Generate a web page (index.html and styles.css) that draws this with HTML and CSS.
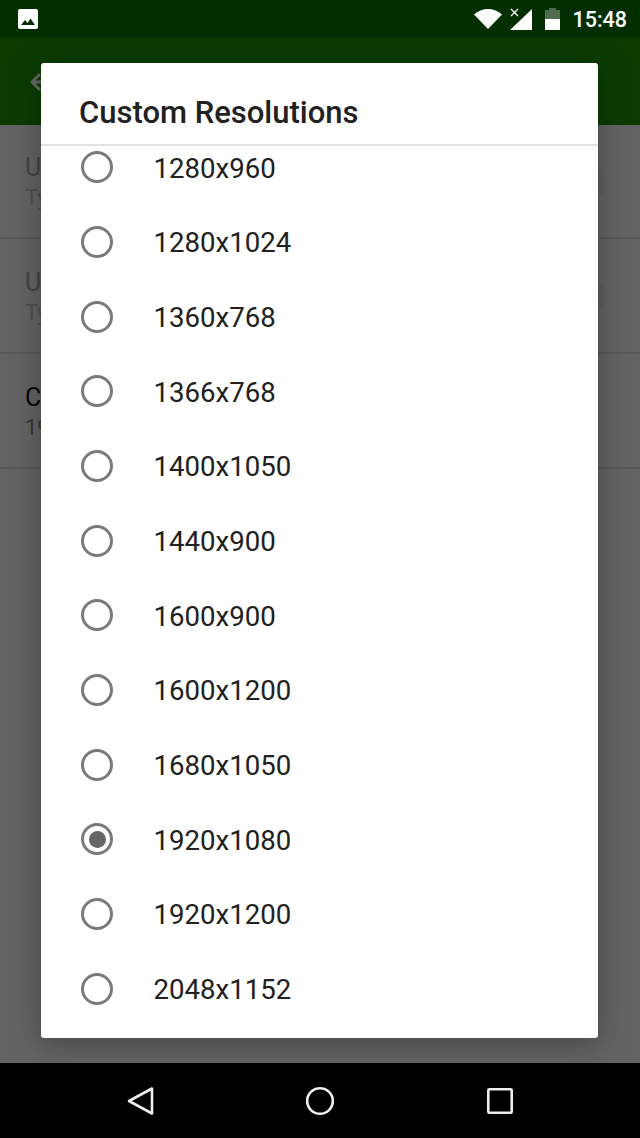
FILE: index.html
```html
<!DOCTYPE html>
<html lang="en">
<head>
<meta charset="utf-8">
<title>Custom Resolutions</title>
<link rel="stylesheet" href="styles.css">
</head>
<body>
<div class="screen">
  <header class="status">
    <svg class="status-pic" viewBox="0 0 20 20"><rect width="20" height="20" rx="2" fill="#fff"/><path d="M3 16l4-5 2.500 3 3-4.500L17 16z" fill="#032f00"/></svg>
    <div class="status-right">
      <svg class="wifi" viewBox="0 0 28 20"><path d="M0 5.500C4 2 9 0 14 0s10 2 14 5.500L14 20z" fill="#fff"/></svg>
      <svg class="signal" viewBox="0 0 22 22"><path d="M22 1v21H0z" fill="#fff"/><path d="M1 1l7 7M8 1L1 8" stroke="#fff" stroke-width="1.200" fill="none"/></svg>
      <svg class="battery" viewBox="0 0 15 22"><path d="M4 0h7v2h4v20H0V2h4z" fill="#fff" fill-opacity=".3"/><path d="M0 11h15v11H0z" fill="#fff"/></svg>
      <span class="clock">15:48</span>
    </div>
  </header>
  <main class="app">
    <div class="appbar"><svg class="back" viewBox="0 0 24 24"><path d="M21 12H5M12 4l-8 8 8 8" stroke="#fff" stroke-width="3" fill="none"/></svg></div>
    <section class="setting"><p class="s-title">Use</p><p class="s-sub">Type</p><span class="toggle"></span></section>
    <section class="setting"><p class="s-title">Use</p><p class="s-sub">Type</p><span class="toggle"></span></section>
    <section class="setting"><p class="s-title strong">Custom</p><p class="s-sub">1920x1080</p></section>
    <div class="scrim"></div>
    <div class="dialog">
      <h1 class="d-title">Custom Resolutions</h1>
      <div class="d-scroll">
        <ul class="list">
          <li class="row"><span class="radio"></span>1280x960</li>
          <li class="row"><span class="radio"></span>1280x1024</li>
          <li class="row"><span class="radio"></span>1360x768</li>
          <li class="row"><span class="radio"></span>1366x768</li>
          <li class="row"><span class="radio"></span>1400x1050</li>
          <li class="row"><span class="radio"></span>1440x900</li>
          <li class="row"><span class="radio"></span>1600x900</li>
          <li class="row"><span class="radio"></span>1600x1200</li>
          <li class="row"><span class="radio"></span>1680x1050</li>
          <li class="row"><span class="radio on"></span>1920x1080</li>
          <li class="row"><span class="radio"></span>1920x1200</li>
          <li class="row"><span class="radio"></span>2048x1152</li>
        </ul>
      </div>
    </div>
  </main>
  <nav class="nav">
    <svg class="nav-icon" viewBox="0 0 32 32"><path d="M27 3.500v25L4 16z" fill="none" stroke="#eee" stroke-width="2.600" stroke-linejoin="round"/></svg>
    <svg class="nav-icon" viewBox="0 0 32 32"><circle cx="16" cy="16" r="12.800" fill="none" stroke="#eee" stroke-width="2.600"/></svg>
    <svg class="nav-icon" viewBox="0 0 32 32"><rect x="4.300" y="4.300" width="23.400" height="23.400" rx="1" fill="none" stroke="#eee" stroke-width="2.600"/></svg>
  </nav>
</div>
</body>
</html>
```
FILE: styles.css
```css
* { box-sizing: border-box; }
html, body { margin: 0; padding: 0; }
body { font-family: Roboto, "Liberation Sans", sans-serif; background: #000; }
.screen { width: 640px; height: 1138px; display: flex; flex-direction: column; overflow: hidden; }

.status { height: 38px; background: #032f00; display: flex; align-items: center; justify-content: space-between; padding: 0 13px 0 18px; flex: none; }
.status-pic { width: 20px; height: 20px; }
.status-right { display: flex; align-items: center; }
.wifi { width: 28px; height: 20px; margin-right: 8px; }
.signal { width: 22px; height: 22px; margin-right: 13px; }
.battery { width: 15px; height: 22px; margin-right: 12px; }
.clock { color: #fff; font-size: 21.500px; font-weight: 500; }

.app { position: relative; flex: 1; background: #fafafa; overflow: hidden; }
.appbar { height: 87px; background: #1a9600; padding: 32px 0 0 28px; }
.back { width: 24px; height: 24px; display: block; }

.setting { position: relative; height: 115px; padding: 29px 25px 0; border-bottom: 2px solid #ddd; }
.setting:first-of-type { height: 114px; padding-top: 28px; }
.s-title, .s-sub { margin: 0; white-space: nowrap; line-height: 30px; }
.s-title { color: #aaa; font-size: 25px; }
.s-title.strong { color: #111; }
.s-sub { color: #c4c4c4; font-size: 22px; }
.setting:last-of-type .s-sub { color: #888; }
.toggle { position: absolute; right: 36px; top: 43px; width: 20px; height: 27px; background: #eee; border-radius: 4px; }

.scrim { position: absolute; inset: 0; background: rgba(0, 0, 0, .6); }

.dialog { position: absolute; left: 41px; top: 25px; width: 557px; height: 975px; background: #fff; border-radius: 3px; box-shadow: 0 6px 32px rgba(0, 0, 0, .32); display: flex; flex-direction: column; overflow: hidden; }
.d-title { margin: 0; height: 83px; flex: none; padding: 32px 38px 0; font-size: 31px; line-height: 36px; font-weight: 500; color: #212121; border-bottom: 2px solid #e2e2e2; white-space: nowrap; }
.d-scroll { flex: 1; overflow: hidden; }
.list { list-style: none; margin: -15px 0 0; padding: 0; }
.row { height: 74.67px; display: flex; align-items: center; padding-left: 40px; font-size: 27.600px; color: #212121; }
.radio { width: 32px; height: 32px; flex: none; margin: 0 40.500px 2px 0; border: 3.800px solid #7a7a7a; border-radius: 50%; display: flex; align-items: center; justify-content: center; }
.radio.on::after { content: ""; width: 17px; height: 17px; border-radius: 50%; background: #666; }

.nav { height: 75px; flex: none; background: #000; display: flex; padding: 22px 0 0 124.500px; gap: 147.500px; }
.nav-icon { width: 32px; height: 32px; }
```
